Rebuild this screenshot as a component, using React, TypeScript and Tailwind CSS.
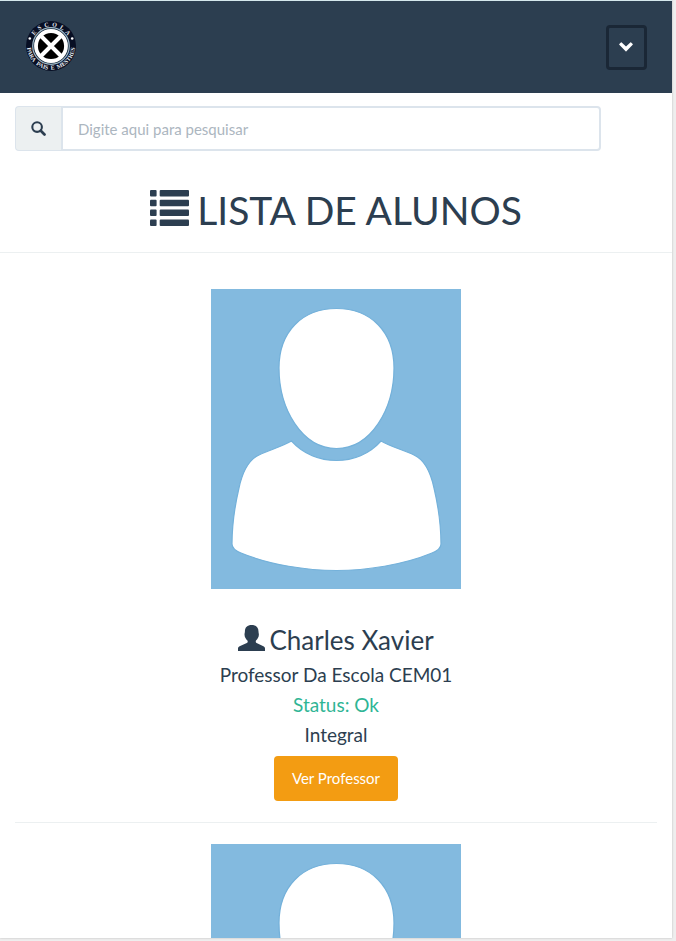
import React from "react";

type Details = { name: string; role: string; status: string; period: string };
type Teacher = { id: number; details?: Details };

const teachers: Teacher[] = [
  {
    id: 1,
    details: { name: "Charles Xavier", role: "Professor Da Escola CEM01", status: "Status: Ok", period: "Integral" },
  },
  { id: 2 },
];

function SchoolLogo() {
  return (
    <svg viewBox="0 0 50 50" className="size-[50px]" role="img" aria-label="Escola para Pais e Mestres">
      <defs>
        <path id="logo-top" d="M5.4 25a19.6 19.6 0 0 1 39.2 0" />
        <path id="logo-bottom" d="M1.3 21a24 24 0 1 0 47.4 0" />
      </defs>
      <circle cx="25" cy="25" r="25" fill="#080f24" />
      <circle cx="25" cy="25" r="18.3" fill="#17283a" stroke="#9fb9c9" strokeWidth="1.2" />
      <circle cx="25" cy="25" r="15" fill="#000" stroke="#fff" strokeWidth="3.8" />
      <path d="M15 15l20 20M35 15L15 35" stroke="#fff" strokeWidth="4" />
      <g fill="#e8edf2" fontFamily="Liberation Serif, serif" fontWeight="700" fontSize="6">
        <text>
          <textPath href="#logo-top" startOffset="50%" textAnchor="middle">E&#160; S&#160; C&#160; O&#160; L&#160; A</textPath>
        </text>
        <text>
          <textPath href="#logo-bottom" startOffset="50%" textAnchor="middle">PARA&#160; PAIS&#160; E&#160; MESTRES</textPath>
        </text>
      </g>
      <circle cx="3.8" cy="17.5" r="1.3" fill="#fff" />
      <circle cx="46.2" cy="17.5" r="1.3" fill="#fff" />
    </svg>
  );
}

function ChevronIcon() {
  return (
    <svg viewBox="0 0 14 10" className="h-[10px] w-[14px]" aria-hidden="true">
      <path d="M2.7.4L7 4.6 11.3.4Q11.7 0 12.1.4L13.7 2Q14 2.4 13.7 2.8L7.4 9.2Q7 9.6 6.6 9.2L.3 2.8Q0 2.4.3 2L1.9.4Q2.3 0 2.7.4Z" fill="#fff" />
    </svg>
  );
}

function SearchIcon() {
  return (
    <svg viewBox="0 0 15 15" className="size-[15px]" aria-hidden="true" fill="none" stroke="#2c3e50">
      <circle cx="6.1" cy="6.1" r="4.8" strokeWidth="2.1" />
      <path d="M9.8 9.8l3.7 3.7" strokeWidth="2.7" strokeLinecap="round" />
    </svg>
  );
}

function ListIcon() {
  return (
    <svg viewBox="0 0 39 36" className="h-9 w-[39px]" aria-hidden="true" fill="#2c3e50">
      {[0, 9.8, 19.6, 29.4].map((y) => (
        <g key={y}>
          <rect x="0" y={y} width="6.6" height="6.5" rx="1" />
          <rect x="9.7" y={y} width="29.3" height="6.5" rx="1" />
        </g>
      ))}
    </svg>
  );
}

function UserIcon() {
  return (
    <svg viewBox="0 0 27 26" className="h-[26px] w-[27px]" aria-hidden="true" fill="#2c3e50">
      <path d="M13.6 0C18 0 20.5 2.4 20.5 6.4c0 1.200.4 1.800.4 3 0 2.800-1.600 4.600-2.900 6.200-.5.7-.3 2.100.6 2.500l6.800 3.200c1.100.6 1.600 1.200 1.600 2.200V26H0v-2.500c0-1 .6-1.600 1.600-2.200l7.200-3.200c1-.4 1.200-1.800.6-2.500-1.300-1.600-2.900-3.400-2.900-6.200 0-1.200.4-1.800.4-3C6.900 2.400 9.400 0 13.600 0Z" />
    </svg>
  );
}

function Avatar() {
  return (
    <svg viewBox="0 0 250 300" className="h-[300px] w-[250px]" role="img" aria-label="Foto do professor">
      <rect width="250" height="300" fill="#83badf" />
      <g fill="#fff" stroke="#74b1da" strokeWidth="1.2">
        <path d="M125.500 19.500C160 19.500 183 43 183 79C183 120 160 159.500 125.500 159.500C91 159.500 68 120 68 79C68 43 91 19.500 125.500 19.500Z" />
        <path d="M80.500 152C104 178 147 178 170 152C180 158 193 161 203 166C214 171 220 185 223 199C227 216 230 237 230 255C230 259 226 262 221 264C192 276 155 281.500 125.500 281.500C96 281.500 59 276 30 264C25 262 21 259 21 255C21 237 24 216 28 199C31 185 37 171 48 166C58 161 70 158 80.500 152Z" />
      </g>
    </svg>
  );
}

function TeacherCard({ details }: { details?: Details }) {
  return (
    <article className="mx-[15px] mb-[21px] flex flex-col items-center border-b border-[#ecf0f1] pb-[21px]">
      <Avatar />
      {details && (
        <>
          <h3 className="mt-9 flex items-start gap-1 text-[26px] leading-[30px]">
            <UserIcon />
            {details.name}
          </h3>
          <div className="mt-[5px] text-center text-[19px] leading-[30px]">
            <p>{details.role}</p>
            <p className="text-[#2fb595]">{details.status}</p>
            <p>{details.period}</p>
          </div>
          <button type="button" className="mt-[6px] h-[45px] rounded bg-[#f39c12] px-[18px] text-[15px] text-white">
            Ver Professor
          </button>
        </>
      )}
    </article>
  );
}

export default function App() {
  return (
    <div className="h-screen bg-[#eeeeee] pr-1 pb-[3px] font-['Lato',sans-serif] text-[#2c3e50]">
      <div className="h-full overflow-hidden bg-white shadow-[0_0_2px_#bbbbbb]">
        <header className="flex h-[93px] items-start justify-between border-t border-[#d5e8ec] bg-[#2c3e50] pt-5 pr-[25px] pl-[26px]">
          <a href="#inicio">
            <SchoolLogo />
          </a>
          <button
            type="button"
            aria-label="Abrir menu"
            className="mt-1 flex h-[45px] w-[41px] items-center justify-center rounded border-[3px] border-[#1a2736] pr-[2px] pb-[2px]"
          >
            <ChevronIcon />
          </button>
        </header>

        <main>
          <form className="mt-[13px] mr-[71px] ml-[15px] flex" role="search">
            <label
              htmlFor="pesquisa"
              className="flex h-[45px] w-[46px] items-center justify-center rounded-l border border-r-0 border-[#dce4ec] bg-[#ecf0f1]"
            >
              <SearchIcon />
            </label>
            <input
              id="pesquisa"
              type="text"
              placeholder="Digite aqui para pesquisar"
              className="h-[45px] min-w-0 flex-1 rounded-r border-2 border-[#dce4ec] px-[15px] text-[15px] outline-none placeholder:text-[#acb6c0]"
            />
          </form>

          <h1 className="mt-[39px] flex items-start justify-center gap-2 border-b border-[#ecf0f1] pb-[22px] text-[39px] leading-10">
            <ListIcon />
            LISTA DE ALUNOS
          </h1>

          <div className="pt-9">
            {teachers.map((teacher) => (
              <TeacherCard key={teacher.id} details={teacher.details} />
            ))}
          </div>
        </main>
      </div>
    </div>
  );
}
